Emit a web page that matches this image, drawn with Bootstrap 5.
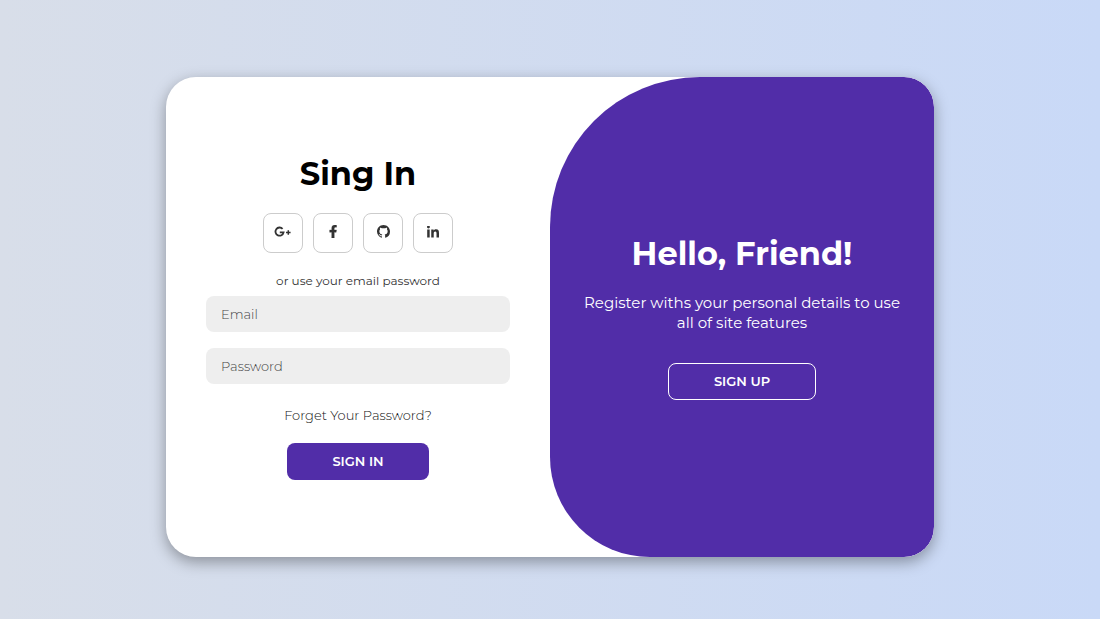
<!DOCTYPE html>
<html lang="en">
<head>
<meta charset="utf-8">
<meta name="viewport" content="width=device-width, initial-scale=1">
<title>Sign in</title>
<link href="https://cdn.jsdelivr.net/npm/bootstrap@5.3.0/dist/css/bootstrap.min.css" rel="stylesheet">
<style>
  :root { --brand: #512da8; }
  body {
    font-family: Montserrat, Inter, "Open Sans", sans-serif;
    font-size: 13px;
    background: linear-gradient(to right, #d8dee9, #c9d9f7);
    padding-top: 15px;
  }
  .auth-card {
    max-width: 768px;
    min-height: 480px;
    border-radius: 30px;
    box-shadow: 0 5px 15px rgba(0, 0, 0, .35);
  }
  .auth-form { padding: 0 40px; color: #333; }
  .auth-title { font-size: 32px; line-height: 38px; font-weight: 700; margin-bottom: 20px; }
  .social { gap: 10px; margin-bottom: 20px; }
  .social a { width: 40px; height: 40px; padding-bottom: 2px; border: 1px solid #ccc; border-radius: 8px; color: #333; }
  .hint { font-size: 12px; line-height: 15px; margin-bottom: 8px; }
  .field {
    height: 36px; padding: 0 15px; border: 0; border-radius: 8px;
    background: #eee; font-size: 13px; font-weight: 300; margin-bottom: 16px;
  }
  .field:focus { background: #eee; }
  .field::placeholder { color: #444; }
  .forgot { color: #111; font-weight: 300; line-height: 16px; margin: 7px 0 20px; }
  .auth-btn {
    height: 37px; padding: 0; border-radius: 8px;
    font-size: 13px; line-height: 15px; font-weight: 600; text-transform: uppercase;
  }
  .btn-brand { width: 142px; --bs-btn-color: #fff; --bs-btn-bg: var(--brand); --bs-btn-hover-color: #fff; --bs-btn-hover-bg: #45268f; }
  .btn-ghost { width: 148px; }
  .welcome { background: var(--brand); border-radius: 150px 30px 30px 100px; padding: 0 30px; }
  .welcome p { font-size: 15px; line-height: 20px; margin-bottom: 30px; }
</style>
</head>
<body class="min-vh-100 d-flex align-items-center justify-content-center">
<main class="auth-card container-fluid bg-white overflow-hidden px-0 d-flex">
  <div class="row g-0 flex-fill">
    <form class="auth-form col-6 d-flex flex-column align-items-center justify-content-center">
      <h1 class="auth-title text-black">Sing In</h1>
      <div class="social d-flex">
        <a href="#" class="d-flex align-items-center justify-content-center" aria-label="Google Plus">
          <svg width="18" height="12" viewBox="0 0 18 12" fill="none" stroke="currentColor" stroke-width="1.8"><path d="M8.6 2.8A4.1 4.1 0 1 0 9.6 6.4H5.8"/><path d="M14.3 4.2v4.6M12 6.5h4.6" stroke-width="1.5"/></svg>
        </a>
        <a href="#" class="d-flex align-items-center justify-content-center" aria-label="Facebook">
          <svg width="8" height="13" viewBox="10 0 290 512" fill="currentColor" stroke="currentColor" stroke-width="12"><path d="M279.14 288l14.22-92.66h-88.91v-60.13c0-25.35 12.42-50.06 52.24-50.06h40.42V6.26S260.43 0 225.36 0c-73.22 0-121.08 44.38-121.08 124.72v70.62H22.89V288h81.39v224h100.17V288z"/></svg>
        </a>
        <a href="#" class="d-flex align-items-center justify-content-center" aria-label="GitHub">
          <svg width="13" height="13" viewBox="0 0 16 16" fill="currentColor"><path d="M8 0C3.58 0 0 3.58 0 8c0 3.54 2.29 6.53 5.47 7.59.4.07.55-.17.55-.38 0-.19-.01-.82-.01-1.49-2.01.37-2.53-.49-2.69-.94-.09-.23-.48-.94-.82-1.13-.28-.15-.68-.52-.01-.53.63-.01 1.08.58 1.23.82.72 1.21 1.87.87 2.33.66.07-.52.28-.87.51-1.07-1.78-.2-3.64-.89-3.64-3.95 0-.87.31-1.59.82-2.15-.08-.2-.36-1.02.08-2.12 0 0 .67-.21 2.2.82a7.6 7.6 0 0 1 4 0c1.53-1.04 2.2-.82 2.2-.82.44 1.1.16 1.92.08 2.12.51.56.82 1.27.82 2.15 0 3.07-1.87 3.75-3.65 3.95.29.25.54.73.54 1.48 0 1.07-.01 1.93-.01 2.2 0 .21.15.46.55.38A8.01 8.01 0 0 0 16 8c0-4.42-3.58-8-8-8z"/></svg>
        </a>
        <a href="#" class="d-flex align-items-center justify-content-center" aria-label="LinkedIn">
          <svg width="12" height="12" viewBox="0 -16 448 448" fill="currentColor"><path d="M100.28 416H7.4V116.9h92.88zM53.79 76.1C24.09 76.1 0 51.5 0 21.8a53.79 53.79 0 0 1 107.58 0c0 29.7-24.1 54.3-53.79 54.3zM447.9 416h-92.68V270.4c0-34.7-.7-79.2-48.29-79.2-48.29 0-55.69 37.7-55.69 76.7V416h-92.78V116.9h89.08v40.8h1.3c12.4-23.5 42.69-48.3 87.88-48.3 94 0 111.28 61.9 111.28 142.3V416z"/></svg>
        </a>
      </div>
      <span class="hint">or use your email password</span>
      <input type="email" class="field form-control" placeholder="Email" aria-label="Email">
      <input type="password" class="field form-control" placeholder="Password" aria-label="Password">
      <a href="#" class="forgot text-decoration-none">Forget Your Password?</a>
      <button type="button" class="btn btn-brand auth-btn border-0">Sign In</button>
    </form>
    <section class="welcome col-6 text-white text-center d-flex flex-column align-items-center justify-content-center">
      <h1 class="auth-title">Hello, Friend!</h1>
      <p>Register withs your personal details to use all of site features</p>
      <button type="button" class="btn btn-ghost auth-btn text-white border-white">Sign Up</button>
    </section>
  </div>
</main>
<script src="https://cdn.jsdelivr.net/npm/bootstrap@5.3.0/dist/js/bootstrap.bundle.min.js"></script>
</body>
</html>
